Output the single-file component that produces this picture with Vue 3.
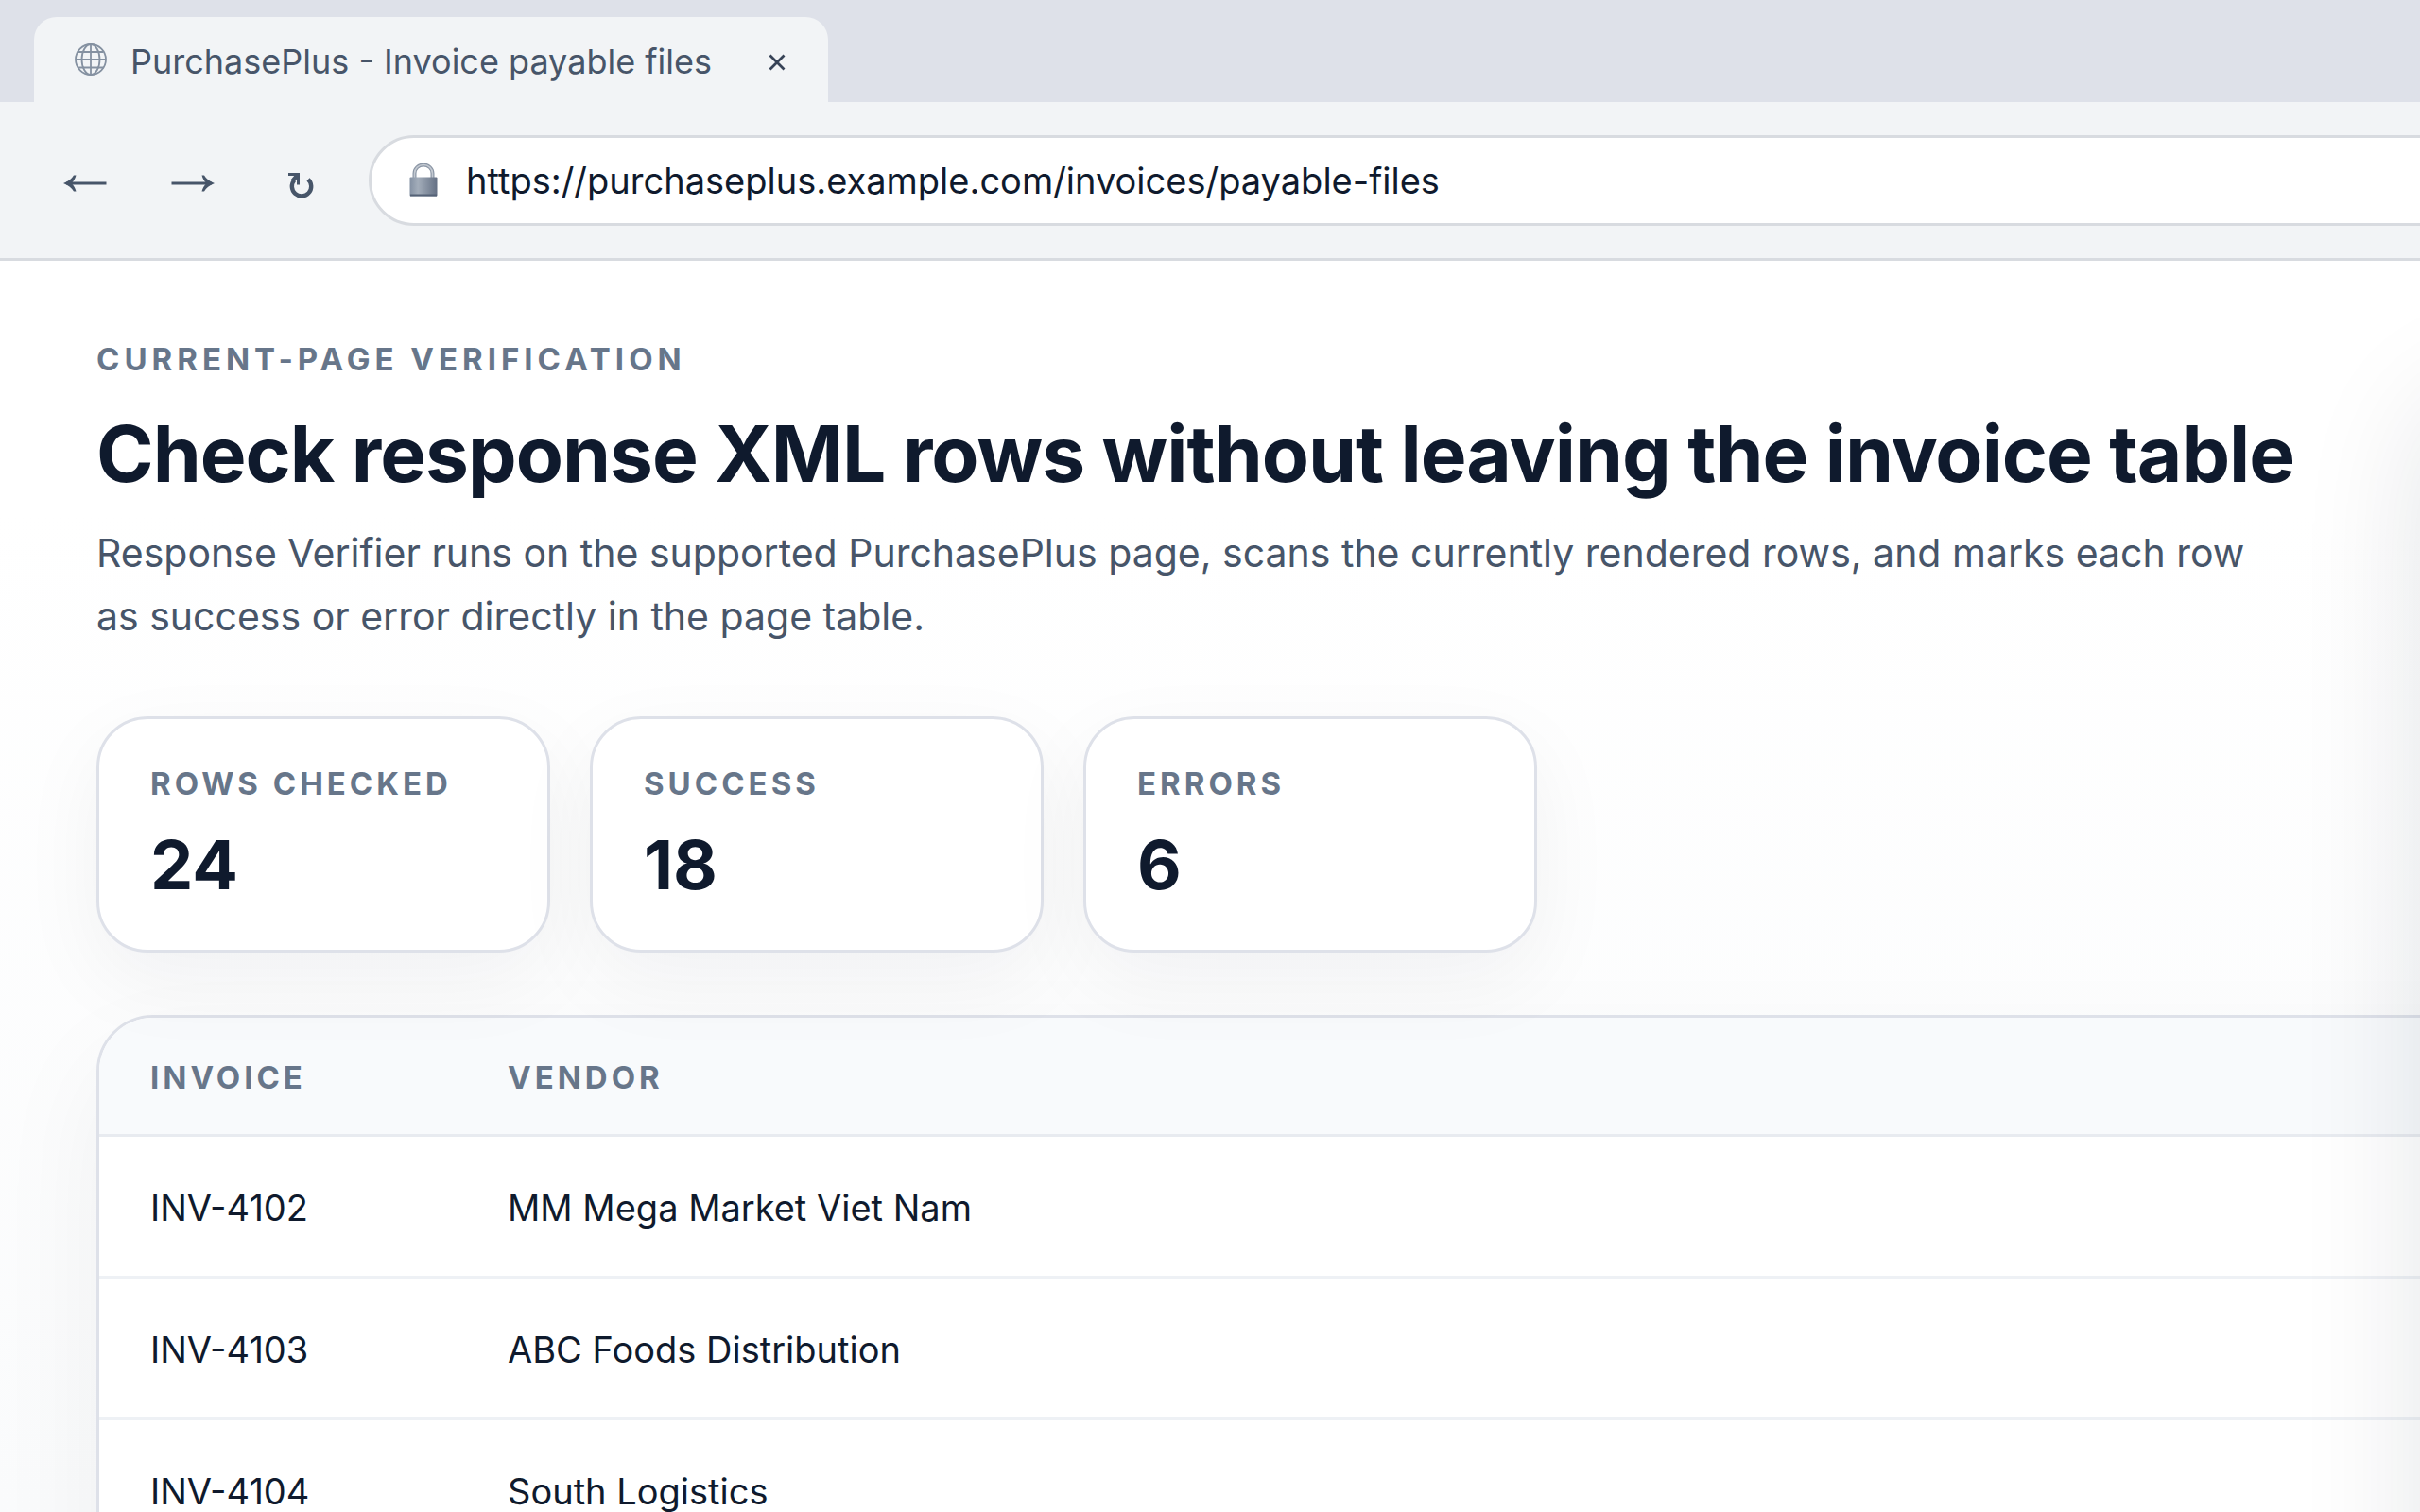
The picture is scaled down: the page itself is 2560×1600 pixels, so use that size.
<script setup>
import { ref } from 'vue';

const url = ref('https://purchaseplus.example.com/invoices/payable-files');

const stats = [
  { label: 'Rows checked', value: 24 },
  { label: 'Success', value: 18 },
  { label: 'Errors', value: 6 }
];

const invoices = [
  { id: 'INV-4102', vendor: 'MM Mega Market Viet Nam' },
  { id: 'INV-4103', vendor: 'ABC Foods Distribution' },
  { id: 'INV-4104', vendor: 'South Logistics' }
];
</script>

<template>
  <div class="browser">
    <div class="tab-strip">
      <div class="tab">
        <svg class="globe" viewBox="0 0 36 36" aria-hidden="true">
          <g fill="none" stroke="#8591a1" stroke-width="1.8">
            <circle cx="18" cy="16" r="16" />
            <ellipse cx="18" cy="16" rx="9.5" ry="16" />
            <path d="M18 0v32M2 16h32M4.500 8h27M4.500 24.500h27" />
          </g>
        </svg>
        <span class="tab-title">PurchasePlus - Invoice payable files</span>
        <button class="tab-close" aria-label="Close tab">
          <svg viewBox="0 0 18 18"><path d="M1.500 1.500l15 15M16.500 1.500l-15 15" fill="none" stroke="#374357" stroke-width="2.8" /></svg>
        </button>
      </div>
    </div>

    <div class="toolbar">
      <button class="nav-btn" aria-label="Back">
        <svg viewBox="0 -6 48 42">
          <path d="M4 18H46.500" fill="none" stroke="#475569" stroke-width="2.8" />
          <path d="M1 18C6.500 16 10 13 12 9.500H14.500C13.500 13 12 16 9.500 18C12 20 13.500 23 14.500 26.500H12C10 23 6.500 20 1 18Z" fill="#475569" />
        </svg>
      </button>
      <button class="nav-btn" aria-label="Forward">
        <svg viewBox="0 -6 48 42">
          <path d="M1.500 18H44" fill="none" stroke="#475569" stroke-width="2.8" />
          <path d="M47 18C41.500 16 38 13 36 9.500H33.500C34.500 13 36 16 38.500 18C36 20 34.500 23 33.500 26.500H36C38 23 41.500 20 47 18Z" fill="#475569" />
        </svg>
      </button>
      <button class="nav-btn" aria-label="Reload">
        <svg viewBox="0 -6 48 42">
          <g fill="none" stroke="#475569">
            <path d="M32 13.800A10.200 10.200 0 1 1 17.300 14.600" stroke-width="4.400" />
            <path d="M11 8.500H21.500V19.500" stroke-width="3" />
            <path d="M21 9L15.500 15.500" stroke-width="4.400" />
          </g>
        </svg>
      </button>
      <label class="address">
        <svg class="lock" viewBox="0 0 30 36" aria-hidden="true">
          <defs>
            <linearGradient id="lockBody" x1="0" x2="1">
              <stop offset="0" stop-color="#8491a3" />
              <stop offset=".3" stop-color="#a3adba" />
              <stop offset="1" stop-color="#647084" />
            </linearGradient>
          </defs>
          <path d="M5.500 17V10.500a9.500 9 0 0 1 19 0V17" fill="none" stroke="#8b96a5" stroke-width="4" />
          <path d="M5.500 17V10.500a9.500 9 0 0 1 19 0V17" fill="none" stroke="#c3c9d1" stroke-width="1.600" />
          <rect x=".5" y="14.500" width="29" height="20" rx="1" fill="url(#lockBody)" />
          <path d="M1 33.500h28" stroke="#556277" stroke-width="2" />
        </svg>
        <input v-model="url" type="text" aria-label="Address" spellcheck="false" />
      </label>
    </div>

    <main class="page">
      <p class="eyebrow">Current-page verification</p>
      <h1>Check response XML rows without leaving the invoice table</h1>
      <p class="lead">
        Response Verifier runs on the supported PurchasePlus page, scans the currently rendered rows, and marks each row
        as success or error directly in the page table.
      </p>

      <div class="stats">
        <div v-for="stat in stats" :key="stat.label" class="stat-card">
          <span class="stat-label">{{ stat.label }}</span>
          <strong class="stat-value">{{ stat.value }}</strong>
        </div>
      </div>

      <div class="table-card">
        <table>
          <thead>
            <tr>
              <th class="col-invoice">Invoice</th>
              <th>Vendor</th>
            </tr>
          </thead>
          <tbody>
            <tr v-for="invoice in invoices" :key="invoice.id">
              <td>{{ invoice.id }}</td>
              <td>{{ invoice.vendor }}</td>
            </tr>
          </tbody>
        </table>
      </div>
    </main>

    <!-- side panel parked past the right edge, only its shadow reaches the page -->
    <div class="side-panel"></div>
  </div>
</template>

<style>
body {
  margin: 0;
}
</style>

<style scoped>
.browser {
  position: relative;
  display: flex;
  flex-direction: column;
  height: 100vh;
  overflow: hidden;
  color: #0f1a2d;
  background: #fff;
  font-family: Inter, 'Liberation Sans', sans-serif;
}

button { padding: 0; border: 0; background: none; cursor: pointer; }
svg { display: block; }

.tab-strip {
  flex: none;
  display: flex;
  padding: 18px 36px 0;
  background: #dee1e9;
}

.tab {
  display: flex;
  align-items: center;
  box-sizing: border-box;
  width: 840px;
  height: 90px;
  padding: 3px 42px 0;
  border-radius: 24px 24px 0 0;
  background: #f2f4f6;
}

.globe { width: 36px; height: 36px; overflow: visible; }
.tab-title { flex: 1; margin-left: 24px; color: #475569; font-size: 36px; line-height: 48px; white-space: nowrap; }
.tab-close { width: 24px; padding: 6px 3px 3px; }

.toolbar {
  flex: none;
  display: flex;
  align-items: center;
  gap: 30px;
  height: 165px;
  padding: 0 48px;
  border-bottom: 3px solid #d8dbe0;
  background: #f2f4f6;
}

.nav-btn { flex: none; display: flex; justify-content: center; width: 84px; }
.nav-btn svg { width: 48px; height: 42px; }

.address {
  flex: 1;
  display: flex;
  align-items: center;
  gap: 30px;
  box-sizing: border-box;
  height: 96px;
  margin-right: -120px;
  padding: 0 40px;
  border: 3px solid #d8dbe0;
  border-radius: 48px;
  background: #fff;
}

.lock { flex: none; width: 30px; height: 36px; }
.address input { flex: 1; padding: 0; border: 0; outline: 0; background: none; color: #0f1a2d; font: inherit; font-size: 38px; line-height: 48px; }

.page {
  flex: 1;
  min-height: 0;
  padding: 84px 102px;
  background: linear-gradient(#fff, #fff 20%, #fafbfc);
}

.eyebrow,
.stat-label,
th {
  color: #67768a;
  font-size: 33px;
  font-weight: 700;
  line-height: 40px;
  letter-spacing: 4px;
  text-transform: uppercase;
}

.eyebrow { margin: 0; letter-spacing: 5px; }

h1 {
  margin: 36px 0 26px;
  font-size: 82px;
  font-weight: 700;
  line-height: 90px;
  letter-spacing: -1px;
}

.lead { max-width: 2280px; margin: 0; color: #475569; font-size: 41px; line-height: 67px; }

.stats { display: flex; gap: 42px; margin-top: 72px; }

.stat-card {
  display: flex;
  flex-direction: column;
  gap: 24px;
  box-sizing: border-box;
  width: 480px;
  height: 250px;
  padding: 48px 54px;
  border: 3px solid #dee1e9;
  border-radius: 54px;
  background: #fff;
  box-shadow: 0 30px 90px rgba(15, 23, 42, 0.05);
}

.stat-value { font-size: 72px; font-weight: 700; line-height: 84px; }

.table-card {
  width: 2700px;
  margin-top: 66px;
  padding-bottom: 60px;
  overflow: hidden;
  border: 3px solid #dee1e9;
  border-radius: 60px;
  background: #fff;
  box-shadow: 0 48px 120px rgba(15, 23, 42, 0.05);
}

table { width: 100%; border-collapse: separate; border-spacing: 0; text-align: left; }
th, td { box-sizing: border-box; padding: 2px 0 0 54px; }
th { height: 126px; background: #f8fafc; border-bottom: 3px solid #e8ebf0; }
td { height: 150px; border-bottom: 3px solid #eef1f5; font-size: 38px; line-height: 48px; }
th + th, td + td { padding-left: 0; }
.col-invoice { width: 432px; }

.side-panel {
  position: absolute;
  top: 360px;
  left: 100%;
  width: 900px;
  height: 1800px;
  border-radius: 72px;
  box-shadow: 0 60px 132px rgba(15, 23, 42, 0.11);
}
</style>
